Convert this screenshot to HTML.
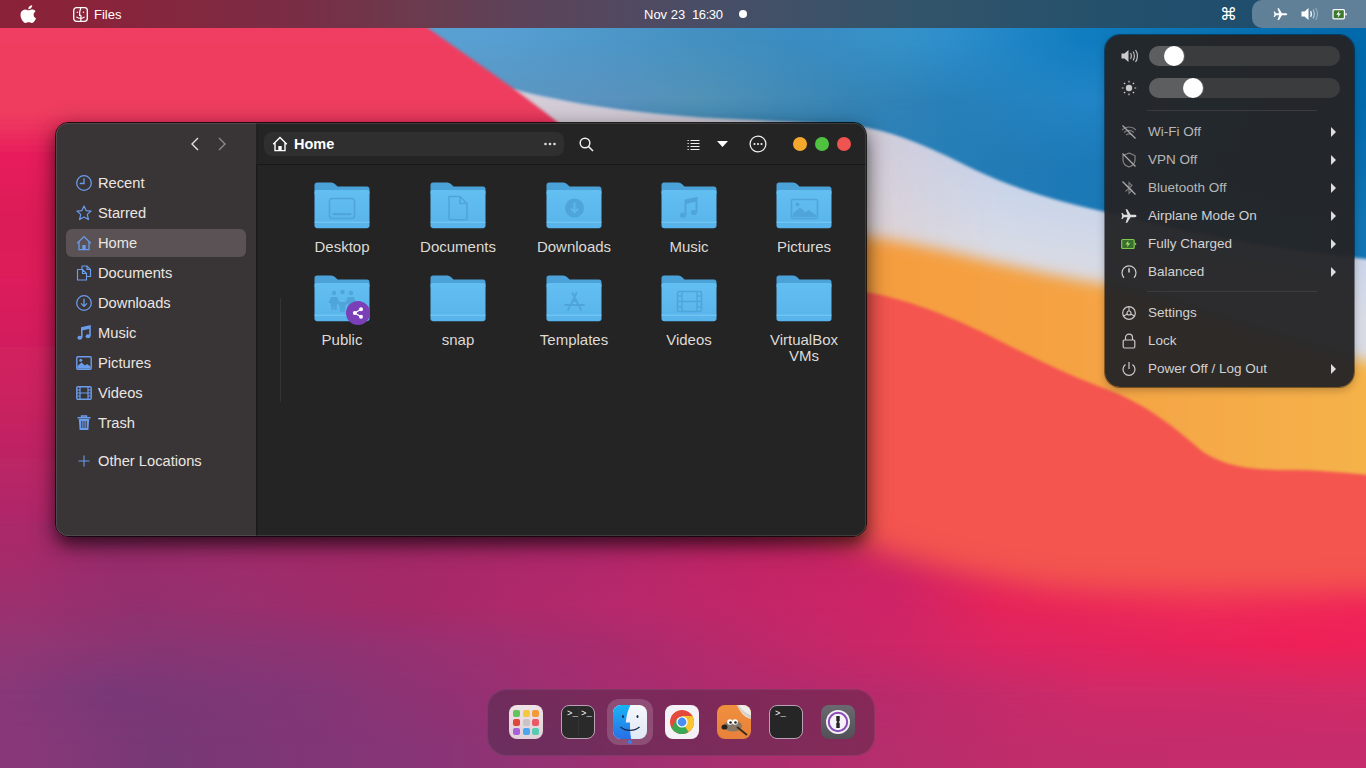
<!DOCTYPE html>
<html><head><meta charset="utf-8">
<style>
*{margin:0;padding:0;box-sizing:border-box}
html,body{width:1366px;height:768px;overflow:hidden;background:#b82a6c;font-family:"Liberation Sans",sans-serif}

#wp{position:absolute;left:0;top:0;width:1366px;height:768px}
.abs{position:absolute}
#topbar{position:absolute;left:0;top:0;width:1366px;height:28px;background:linear-gradient(to right,#8a2239 0px,#88243b 120px,#782e46 308px,#6c3a4c 408px,#5e4258 508px,#484e66 708px,#33546a 908px,#214f6c 1158px,#1e4c6e 1366px)}
.tb-t{position:absolute;top:7px;color:#fff;font-size:13.5px;line-height:15px;white-space:nowrap}
#pill{position:absolute;left:1252px;top:0;width:130px;height:27.5px;border-radius:10px;background:rgba(255,255,255,0.29)}
#win{position:absolute;left:55px;top:122px;width:812px;height:415px;border-radius:13px;overflow:hidden;border:1px solid rgba(0,0,0,0.85);box-shadow:0 9px 16px -2px rgba(0,0,0,0.5),0 6px 26px rgba(0,0,0,0.38)}
#winhl{position:absolute;left:0;top:0;width:810px;height:413px;border-radius:12px;box-shadow:inset 0 0 0 1px rgba(255,255,255,0.11);z-index:5;pointer-events:none}
#side{position:absolute;left:0;top:-1px;width:201px;height:414px;background:#393435}
#homehl{position:absolute;left:10px;top:107px;width:180px;height:28px;border-radius:6px;background:#5a5254}
.si{position:absolute;left:20px;height:20px;width:170px;margin-top:-1px}
.si .ic{position:absolute;left:0;top:2px;width:16px;height:16px}
.si span{position:absolute;left:22px;top:2px;font-size:14.7px;line-height:16px;color:#ebe6e2;white-space:nowrap}
#main{position:absolute;left:201px;top:-1px;width:609px;height:414px;background:#242424}
#hdr{position:absolute;left:-1px;top:0;width:610px;height:43px;border-bottom:1px solid #171717;background:#242424}
#pathbar{position:absolute;left:8px;top:10px;width:300px;height:24px;border-radius:8px;background:#2f2f2f}
#ptitle{position:absolute;left:30px;top:4px;color:#fff;font-weight:bold;font-size:14.5px;line-height:16px}
.dotb{position:absolute;top:15px;width:14px;height:14px;border-radius:50%}
#grid{position:absolute;left:-1px;top:42px;width:610px;height:414px}
.lbl{position:absolute;width:100px;text-align:center;color:#dedad6;font-size:15px;line-height:16px}
#qs{position:absolute;left:1105px;top:35px;width:249px;height:352px;border-radius:15px;background:rgba(36,36,38,0.96);box-shadow:0 0 0 1px rgba(0,0,0,0.4),0 3px 8px rgba(0,0,0,0.25)}
.track{position:absolute;left:44px;width:191px;height:20px;border-radius:10px;background:#3b3c3e;overflow:visible}
.track .fill{position:absolute;left:0;top:0;height:20px;border-radius:10px;background:#5d5e60}
.track .knob{position:absolute;top:0;width:20px;height:20px;border-radius:50%;background:#fff}
.sep{position:absolute;left:42px;width:170px;height:1px;background:#3c3c3e}
.qi{position:absolute;left:16px;width:220px;height:20px}
.qi .qic{position:absolute;left:0;top:2px;width:16px;height:16px}
.qi span{position:absolute;left:27px;top:2px;font-size:13.5px;line-height:16px;color:#d2d2d2;white-space:nowrap}
.qi i{position:absolute;left:210px;top:5px;width:0;height:0;border-left:5px solid #ddd;border-top:5px solid transparent;border-bottom:5px solid transparent}
#dock{position:absolute;left:487px;top:689px;width:388px;height:67px;border-radius:20px;background:rgba(30,36,46,0.32);box-shadow:inset 0 0 0 1px rgba(255,255,255,0.07)}
#dhl{position:absolute;left:120px;top:10px;width:46px;height:46px;border-radius:12px;background:rgba(255,255,255,0.17)}
.di{position:absolute;top:16px;width:34px;height:34px;border-radius:8px}
.lp{position:absolute;width:7px;height:7px;border-radius:2px}
.tt{position:absolute;color:#fff;font-family:"Liberation Mono",monospace;font-size:9px;line-height:10px}
</style></head><body>
<svg id="wp" width="1366" height="768" viewBox="0 0 1366 768">
<defs>
<filter id="b2" x="-10%" y="-10%" width="120%" height="120%"><feGaussianBlur stdDeviation="1.5"/></filter>
<filter id="b4" x="-10%" y="-10%" width="120%" height="120%"><feGaussianBlur stdDeviation="3"/></filter>
<filter id="b8" x="-10%" y="-10%" width="120%" height="120%"><feGaussianBlur stdDeviation="7"/></filter>
<filter id="b14" x="-10%" y="-10%" width="120%" height="120%"><feGaussianBlur stdDeviation="14"/></filter>
<filter id="b35" x="-10%" y="-10%" width="120%" height="120%"><feGaussianBlur stdDeviation="38"/></filter>
<linearGradient id="gBlue" gradientUnits="userSpaceOnUse" x1="430" y1="60" x2="1366" y2="200">
<stop offset="0" stop-color="#4c93c2"/><stop offset="0.35" stop-color="#4490c4"/><stop offset="0.7" stop-color="#2f87c8"/><stop offset="1" stop-color="#1e7cc4"/>
</linearGradient>
<linearGradient id="gOrange" gradientUnits="userSpaceOnUse" x1="900" y1="0" x2="1366" y2="0"><stop offset="0" stop-color="#f59e40"/><stop offset="0.35" stop-color="#f5a243"/><stop offset="1" stop-color="#f5b24a"/></linearGradient>
<linearGradient id="gLav" gradientUnits="userSpaceOnUse" x1="1000" y1="165" x2="985" y2="250"><stop offset="0" stop-color="#c6d2ea"/><stop offset="0.6" stop-color="#d0d8e8"/><stop offset="1" stop-color="#d8dae4"/></linearGradient>
<linearGradient id="gLavW" gradientUnits="userSpaceOnUse" x1="866" y1="0" x2="1000" y2="0"><stop offset="0" stop-color="#e0c8c8" stop-opacity="0.5"/><stop offset="1" stop-color="#e0c8c8" stop-opacity="0"/></linearGradient>
<linearGradient id="gPink" gradientUnits="userSpaceOnUse" x1="0" y1="0" x2="0" y2="560"><stop offset="0.0500" stop-color="#f03e62"/><stop offset="0.2000" stop-color="#ee3c5e"/><stop offset="0.2750" stop-color="#e81e5c"/><stop offset="0.3821" stop-color="#dc1c58"/><stop offset="0.4893" stop-color="#dd1d5a"/><stop offset="0.7232" stop-color="#c92160"/><stop offset="0.9554" stop-color="#aa296a"/><stop offset="1.0000" stop-color="#a82a6a"/></linearGradient>
<filter id="mb" x="-20%" y="-20%" width="140%" height="140%"><feGaussianBlur stdDeviation="14"/></filter><mask id="lowMask" maskUnits="userSpaceOnUse" x="-200" y="0" width="1766" height="1000"><path d="M-100,470 L700,505 C780,520 830,535 866,545 C900,558 960,575 1040,586 C1150,596 1300,592 1466,590 L1466,900 L-100,900 Z" fill="#fff" filter="url(#mb)"/></mask>
</defs>
<defs><linearGradient id="brow0" gradientUnits="userSpaceOnUse" x1="0" y1="0" x2="1366" y2="0"><stop offset="0.3148" stop-color="#5aa0d2"/><stop offset="0.3660" stop-color="#579fd2"/><stop offset="0.5183" stop-color="#4390c0"/><stop offset="0.5857" stop-color="#3a8cc2"/><stop offset="0.6589" stop-color="#3592c8"/><stop offset="0.6955" stop-color="#2e8ecc"/><stop offset="0.7906" stop-color="#107dc0"/><stop offset="1.0000" stop-color="#026aac"/></linearGradient>
<linearGradient id="brow1" gradientUnits="userSpaceOnUse" x1="0" y1="0" x2="1366" y2="0"><stop offset="0.3660" stop-color="#5a96c0"/><stop offset="0.4466" stop-color="#5a92be"/><stop offset="0.5124" stop-color="#5292b6"/><stop offset="0.6223" stop-color="#3684b5"/><stop offset="0.6955" stop-color="#2880b8"/><stop offset="0.7980" stop-color="#2285c6"/><stop offset="1.0000" stop-color="#026aac"/></linearGradient>
<linearGradient id="brm1" gradientUnits="userSpaceOnUse" x1="0" y1="40" x2="0" y2="100"><stop offset="0" stop-color="#fff" stop-opacity="0"/><stop offset="1" stop-color="#fff" stop-opacity="1"/></linearGradient>
<mask id="bmk1" maskUnits="userSpaceOnUse" x="-100" y="-100" width="1566" height="1000"><rect x="-100" y="40" width="1566" height="860" fill="url(#brm1)"/></mask>
<linearGradient id="brow2" gradientUnits="userSpaceOnUse" x1="0" y1="0" x2="1366" y2="0"><stop offset="0.6340" stop-color="#2e82b8"/><stop offset="0.7321" stop-color="#237bb5"/><stop offset="0.7980" stop-color="#1c7ab8"/><stop offset="1.0000" stop-color="#0a6eae"/></linearGradient>
<linearGradient id="brm2" gradientUnits="userSpaceOnUse" x1="0" y1="100" x2="0" y2="160"><stop offset="0" stop-color="#fff" stop-opacity="0"/><stop offset="1" stop-color="#fff" stop-opacity="1"/></linearGradient>
<mask id="bmk2" maskUnits="userSpaceOnUse" x="-100" y="-100" width="1566" height="1000"><rect x="-100" y="100" width="1566" height="800" fill="url(#brm2)"/></mask>
<linearGradient id="brow3" gradientUnits="userSpaceOnUse" x1="0" y1="0" x2="1366" y2="0"><stop offset="0.6340" stop-color="#2a80b8"/><stop offset="0.7980" stop-color="#1b78b5"/><stop offset="1.0000" stop-color="#1274b2"/></linearGradient>
<linearGradient id="brm3" gradientUnits="userSpaceOnUse" x1="0" y1="160" x2="0" y2="220"><stop offset="0" stop-color="#fff" stop-opacity="0"/><stop offset="1" stop-color="#fff" stop-opacity="1"/></linearGradient>
<mask id="bmk3" maskUnits="userSpaceOnUse" x="-100" y="-100" width="1566" height="1000"><rect x="-100" y="160" width="1566" height="740" fill="url(#brm3)"/></mask></defs>
<rect x="-100" y="-100" width="1566" height="1000" fill="url(#brow0)"/>
<rect x="-100" y="40" width="1566" height="860" fill="url(#brow1)" mask="url(#bmk1)"/>
<rect x="-100" y="100" width="1566" height="800" fill="url(#brow2)" mask="url(#bmk2)"/>
<rect x="-100" y="160" width="1566" height="740" fill="url(#brow3)" mask="url(#bmk3)"/>
<!-- lavender -->
<path d="M515,90 C560,102 620,112 700,118 C780,122 840,124 866,128 C900,134 935,150 975,170 C1010,186 1050,200 1106,212 C1200,236 1300,254 1400,262 L1400,800 L-50,800 L-50,300 Z" fill="url(#gLav)" filter="url(#b2)"/>
<path d="M515,90 C560,102 620,112 700,118 C780,122 840,124 866,128 C900,134 935,150 975,170 C1010,186 1050,200 1106,212 C1200,236 1300,254 1400,262 L1400,800 L-50,800 L-50,300 Z" fill="url(#gLavW)" filter="url(#b2)"/>
<!-- orange -->
<path d="M-50,300 L700,228 C780,232 840,234 866,236 C900,241 940,249 980,259 C1030,270 1070,280 1106,284 C1200,306 1300,350 1400,368 L1400,800 L-50,800 Z" fill="url(#gOrange)" filter="url(#b8)"/>
<!-- coral -->
<path d="M-50,340 L700,282 C800,285 840,288 866,292 C900,298 935,310 980,331 C1015,348 1050,368 1106,389 C1150,406 1175,428 1203,452 C1228,468 1255,470 1290,470 C1320,470 1345,473 1400,478 L1400,800 L-50,800 Z" fill="#f45450" filter="url(#b2)"/>
<!-- lower grid -->
<defs><linearGradient id="row0" gradientUnits="userSpaceOnUse" x1="0" y1="0" x2="1366" y2="0"><stop offset="0.0146" stop-color="#aa296a"/><stop offset="0.0791" stop-color="#9a2b6a"/><stop offset="0.1669" stop-color="#a02b6b"/><stop offset="0.2987" stop-color="#a52968"/><stop offset="0.4392" stop-color="#b0276a"/><stop offset="0.5183" stop-color="#bc2464"/><stop offset="0.6340" stop-color="#c82462"/><stop offset="0.7321" stop-color="#dc2460"/><stop offset="0.8785" stop-color="#e82a5a"/><stop offset="1.0000" stop-color="#ec2c58"/></linearGradient>
<linearGradient id="row1" gradientUnits="userSpaceOnUse" x1="0" y1="0" x2="1366" y2="0"><stop offset="0.0146" stop-color="#9c306e"/><stop offset="0.1025" stop-color="#922f6e"/><stop offset="0.1669" stop-color="#98306e"/><stop offset="0.2987" stop-color="#a42968"/><stop offset="0.4451" stop-color="#b6296c"/><stop offset="0.5622" stop-color="#c42668"/><stop offset="0.6589" stop-color="#d02466"/><stop offset="0.7321" stop-color="#e62459"/><stop offset="0.8785" stop-color="#ee2c58"/><stop offset="1.0000" stop-color="#ef2458"/></linearGradient>
<linearGradient id="rm1" gradientUnits="userSpaceOnUse" x1="0" y1="540" x2="0" y2="605"><stop offset="0" stop-color="#fff" stop-opacity="0"/><stop offset="1" stop-color="#fff" stop-opacity="1"/></linearGradient>
<mask id="mk1" maskUnits="userSpaceOnUse" x="-100" y="0" width="1566" height="900"><rect x="-100" y="540" width="1566" height="360" fill="url(#rm1)"/></mask>
<linearGradient id="row2" gradientUnits="userSpaceOnUse" x1="0" y1="0" x2="1366" y2="0"><stop offset="0.0059" stop-color="#933674"/><stop offset="0.1157" stop-color="#883572"/><stop offset="0.2255" stop-color="#8e3373"/><stop offset="0.4451" stop-color="#a82c6e"/><stop offset="0.6589" stop-color="#ce2666"/><stop offset="0.7321" stop-color="#dc2562"/><stop offset="0.8053" stop-color="#e2245e"/><stop offset="0.9575" stop-color="#ef2057"/><stop offset="1.0000" stop-color="#ee2258"/></linearGradient>
<linearGradient id="rm2" gradientUnits="userSpaceOnUse" x1="0" y1="605" x2="0" y2="645"><stop offset="0" stop-color="#fff" stop-opacity="0"/><stop offset="1" stop-color="#fff" stop-opacity="1"/></linearGradient>
<mask id="mk2" maskUnits="userSpaceOnUse" x="-100" y="0" width="1566" height="900"><rect x="-100" y="605" width="1566" height="295" fill="url(#rm2)"/></mask>
<linearGradient id="row3" gradientUnits="userSpaceOnUse" x1="0" y1="0" x2="1366" y2="0"><stop offset="0.0059" stop-color="#883878"/><stop offset="0.0791" stop-color="#793878"/><stop offset="0.2255" stop-color="#823676"/><stop offset="0.4451" stop-color="#a52d70"/><stop offset="0.6501" stop-color="#ba2a6c"/><stop offset="0.8053" stop-color="#d02a68"/><stop offset="0.8770" stop-color="#d02a68"/><stop offset="1.0000" stop-color="#d42a66"/></linearGradient>
<linearGradient id="rm3" gradientUnits="userSpaceOnUse" x1="0" y1="645" x2="0" y2="692"><stop offset="0" stop-color="#fff" stop-opacity="0"/><stop offset="1" stop-color="#fff" stop-opacity="1"/></linearGradient>
<mask id="mk3" maskUnits="userSpaceOnUse" x="-100" y="0" width="1566" height="900"><rect x="-100" y="645" width="1566" height="255" fill="url(#rm3)"/></mask>
<linearGradient id="row4" gradientUnits="userSpaceOnUse" x1="0" y1="0" x2="1366" y2="0"><stop offset="0.0205" stop-color="#883878"/><stop offset="0.1157" stop-color="#773876"/><stop offset="0.1889" stop-color="#7d3776"/><stop offset="0.3280" stop-color="#8a3476"/><stop offset="0.5124" stop-color="#a62f70"/><stop offset="0.7379" stop-color="#c02c6a"/><stop offset="0.9575" stop-color="#c62c6c"/></linearGradient>
<linearGradient id="rm4" gradientUnits="userSpaceOnUse" x1="0" y1="692" x2="0" y2="745"><stop offset="0" stop-color="#fff" stop-opacity="0"/><stop offset="1" stop-color="#fff" stop-opacity="1"/></linearGradient>
<mask id="mk4" maskUnits="userSpaceOnUse" x="-100" y="0" width="1566" height="900"><rect x="-100" y="692" width="1566" height="208" fill="url(#rm4)"/></mask></defs>
<g mask="url(#lowMask)"><g>
<rect x="-100" y="420" width="1566" height="480" fill="url(#row0)"/>
<rect x="-100" y="540" width="1566" height="360" fill="url(#row1)" mask="url(#mk1)"/>
<rect x="-100" y="605" width="1566" height="295" fill="url(#row2)" mask="url(#mk2)"/>
<rect x="-100" y="645" width="1566" height="255" fill="url(#row3)" mask="url(#mk3)"/>
<rect x="-100" y="692" width="1566" height="208" fill="url(#row4)" mask="url(#mk4)"/>
</g></g>
<!-- pink top-left -->
<path d="M-50,-50 L350,-50 L389,0 L428,28 C470,58 515,88 556,121 C650,200 760,380 800,480 L800,522 L-50,522 Z" fill="url(#gPink)" filter="url(#b2)"/>
</svg>
<!-- top bar -->
<div id="topbar">
  <svg class="abs" style="left:20px;top:4px" width="17" height="19.5" viewBox="1.5 0.5 13.5 16.6" preserveAspectRatio="none"><path fill="#fff" d="M12.3,9.6c0-1.9,1.6-2.8,1.6-2.9c-0.9-1.3-2.3-1.5-2.8-1.5c-1.2-0.1-2.3,0.7-2.9,0.7c-0.6,0-1.5-0.7-2.5-0.7C4.4,5.2,3.2,6,2.5,7.2c-1.3,2.3-0.3,5.7,1,7.600c0.6,0.9,1.4,1.9,2.4,1.9c1,0,1.3-0.6,2.500-0.6c1.2,0,1.5,0.6,2.5,0.6c1,0,1.700-0.9,2.300-1.900c0.7-1.100,1-2.100,1-2.200C14.2,12.6,12.3,11.900,12.300,9.6z M10.400,3.900c0.5-0.6,0.9-1.500,0.8-2.400c-0.8,0-1.700,0.5-2.300,1.100c-0.5,0.6-0.9,1.500-0.8,2.300C9,5,9.900,4.500,10.400,3.900z"/></svg>
  <svg class="abs" style="left:72.5px;top:6.5px" width="15" height="15" viewBox="0 0 16 16"><rect x="0.75" y="0.75" width="14.5" height="14.5" rx="3" fill="none" stroke="#fff" stroke-width="1.4"/><path d="M8.2,1 C7.2,4 6.8,6.5 7,9 L8.6,9 M8.6,9 C8.4,11.5 8.2,13.5 8.4,15" fill="none" stroke="#fff" stroke-width="1.3"/><circle cx="4.6" cy="5.6" r="0.8" fill="#fff"/><circle cx="11.2" cy="5.6" r="0.8" fill="#fff"/><path d="M3.6,10.5 C6,12.5 10,12.5 12.4,10.5" fill="none" stroke="#fff" stroke-width="1.2"/></svg>
  <div class="tb-t" style="left:94px;font-size:13px">Files</div>
  <div class="tb-t" style="left:644px;font-size:13px;top:6.5px">Nov 23</div><div class="tb-t" style="left:692px;font-size:13px;top:6.5px;letter-spacing:-0.4px">16:30</div>
  <div class="abs" style="left:739px;top:10px;width:8px;height:8px;border-radius:50%;background:#fff"></div>
  <div class="abs" style="left:1220px;top:5px;color:#fff;font-size:17px;line-height:20px">&#8984;</div>
  <div id="pill"></div>
  <svg class="abs" style="left:1272.5px;top:7.5px" width="15" height="12.5" viewBox="0 0 16 14"><path fill="#fff" d="M15.5,7 C15.5,6.2 14.6,5.8 13.6,5.8 L9.6,5.8 L6.2,0.3 L4.6,0.3 L6.5,5.8 L2.9,5.8 L1.6,4 L0.4,4 L1.2,7 L0.4,10 L1.6,10 L2.9,8.2 L6.5,8.2 L4.6,13.7 L6.2,13.7 L9.6,8.2 L13.6,8.2 C14.6,8.2 15.5,7.8 15.5,7 Z"/></svg>
  <svg class="abs" style="left:1301px;top:7px" width="18" height="14" viewBox="0 0 18 14"><path fill="#fff" d="M0.5,4.5 L3.5,4.5 L7.5,1 L7.5,13 L3.5,9.5 L0.5,9.5 Z"/><path d="M9.5,4.2 C10.6,5.6 10.6,8.4 9.5,9.8" fill="none" stroke="#e8f4ff" stroke-width="1.5"/><path d="M12,2.5 C13.8,4.8 13.8,9.2 12,11.5" fill="none" stroke="#c8dcea" stroke-width="1.2" opacity="0.8"/><path d="M14.5,1 C17,4 17,10 14.5,13" fill="none" stroke="#c8dcea" stroke-width="1" opacity="0.6"/></svg>
  <svg class="abs" style="left:1332px;top:9px" width="16.5" height="10.5" viewBox="0 0 18 12"><rect x="0.75" y="0.75" width="13" height="10.5" rx="1.2" fill="#3e7a2e" stroke="#fff" stroke-width="1.4"/><path d="M15,4 L17,6 L15,8 Z" fill="#fff"/><path d="M8,2 L4.5,6.6 L7,6.6 L6,10 L9.8,5.2 L7.2,5.2 Z" fill="#fff"/></svg>
</div>

<!-- window -->
<div id="win">
  <div id="winhl"></div>
  <div id="side">
    <svg class="abs" style="left:133px;top:14px" width="12" height="16" viewBox="0 0 12 16"><path d="M9,2 L3,8 L9,14" fill="none" stroke="#e8e3e0" stroke-width="1.4"/></svg>
    <svg class="abs" style="left:160px;top:14px" width="12" height="16" viewBox="0 0 12 16"><path d="M3,2 L9,8 L3,14" fill="none" stroke="#8f8a88" stroke-width="1.4"/></svg>
    <div id="homehl"></div>
    <div class="abs" style="left:200px;top:0;width:1px;height:414px;background:#1b1b1b"></div>
    <div class="si" style="top:52px"><svg class="ic" viewBox="0 0 16 16"><circle cx="8" cy="8" r="7.3" fill="none" stroke="#6a9cec" stroke-width="1.3"/><path d="M8,3.2 L8,8.5 L3.8,8.5" fill="none" stroke="#6a9cec" stroke-width="1.3"/></svg><span>Recent</span></div>
    <div class="si" style="top:82px"><svg class="ic" viewBox="0 0 16 16"><path d="M8,1 L10.1,5.6 L15,6.1 L11.3,9.4 L12.4,14.6 L8,12 L3.6,14.6 L4.7,9.4 L1,6.1 L5.9,5.6 Z" fill="none" stroke="#6a9cec" stroke-width="1.2" stroke-linejoin="round"/></svg><span>Starred</span></div>
    <div class="si" style="top:112px"><svg class="ic" viewBox="0 0 16 16"><path d="M1.2,8.2 L8,1.6 L14.8,8.2 M3,6.8 L3,14.6 L13,14.6 L13,6.8" fill="none" stroke="#6a9cec" stroke-width="1.3"/><rect x="6.3" y="10" width="3.4" height="4.6" fill="#6a9cec"/></svg><span>Home</span></div>
    <div class="si" style="top:142px"><svg class="ic" viewBox="0 0 16 16"><path d="M6,1 L11,1 L14.5,4.5 L14.5,11.5 L10.5,11.5 M6,1 L6,4.5" fill="none" stroke="#6a9cec" stroke-width="1.2"/><path d="M1.5,4.5 L6.5,4.5 L10.5,8.5 L10.5,15 L1.5,15 Z M6.5,4.5 L6.5,8.5 L10.5,8.5" fill="none" stroke="#6a9cec" stroke-width="1.2" stroke-linejoin="round"/><path d="M11,1 L11,4.5 L14.5,4.5" fill="none" stroke="#6a9cec" stroke-width="1.2"/></svg><span>Documents</span></div>
    <div class="si" style="top:172px"><svg class="ic" viewBox="0 0 16 16"><circle cx="8" cy="8" r="7.3" fill="none" stroke="#6a9cec" stroke-width="1.3"/><path d="M8,3.8 L8,11.2 M5,8.4 L8,11.4 L11,8.4" fill="none" stroke="#6a9cec" stroke-width="1.3"/></svg><span>Downloads</span></div>
    <div class="si" style="top:202px"><svg class="ic" viewBox="0 0 16 16"><path d="M5.8,12.5 L5.8,2.8 L14,1 L14,11" fill="none" stroke="#6a9cec" stroke-width="1.6"/><path d="M5.8,2.8 L14,1 L14,3.8 L5.8,5.6 Z" fill="#6a9cec"/><ellipse cx="3.8" cy="12.8" rx="2.4" ry="2" fill="#6a9cec"/><ellipse cx="12" cy="11.2" rx="2.4" ry="2" fill="#6a9cec"/></svg><span>Music</span></div>
    <div class="si" style="top:232px"><svg class="ic" viewBox="0 0 16 16"><rect x="0.8" y="1.8" width="14.4" height="12.4" rx="1" fill="none" stroke="#6a9cec" stroke-width="1.4"/><path d="M1.5,13.5 L1.5,11 L5.5,7.5 L9,10.5 L11,9 L14.5,11.5 L14.5,13.5 Z" fill="#6a9cec"/><circle cx="4.8" cy="5.2" r="1.5" fill="#6a9cec"/></svg><span>Pictures</span></div>
    <div class="si" style="top:262px"><svg class="ic" viewBox="0 0 16 16"><rect x="0.8" y="1.8" width="14.4" height="12.4" rx="1" fill="none" stroke="#6a9cec" stroke-width="1.4"/><path d="M4,2 L4,14 M12,2 L12,14 M1,8 L15,8 M1,5 L4,5 M1,11 L4,11 M12,5 L15,5 M12,11 L15,11" stroke="#6a9cec" stroke-width="1.2"/></svg><span>Videos</span></div>
    <div class="si" style="top:292px"><svg class="ic" viewBox="0 0 16 16"><path d="M5.5,2.2 L5.5,1 L10.5,1 L10.5,2.2 M1.5,2.8 L14.5,2.8" fill="none" stroke="#6a9cec" stroke-width="1.4"/><path d="M2.8,4 L13.2,4 L12.4,15 L3.6,15 Z" fill="#6a9cec"/><path d="M5.8,6 L5.8,13 M8,6 L8,13 M10.2,6 L10.2,13" stroke="#393435" stroke-width="1"/></svg><span>Trash</span></div>
    <div class="si" style="top:330px"><svg class="ic" viewBox="0 0 16 16"><path d="M8,2.5 L8,13.5 M2.5,8 L13.5,8" stroke="#6a9cec" stroke-width="1.1"/></svg><span>Other Locations</span></div>
  </div>
  
  <div id="main">
    <div id="hdr">
      <div id="pathbar">
        <svg class="abs" style="left:8px;top:4px" width="16" height="16" viewBox="0 0 16 16"><path d="M1.2,8.2 L8,1.6 L14.8,8.2 M3,6.8 L3,14.6 L13,14.6 L13,6.8" fill="none" stroke="#fff" stroke-width="1.4"/><rect x="6.3" y="10" width="3.4" height="4.6" fill="#fff"/></svg>
        <div id="ptitle">Home</div>
        <svg class="abs" style="left:280px;top:10px" width="12" height="4" viewBox="0 0 12 4"><circle cx="1.5" cy="2" r="1.3" fill="#ddd"/><circle cx="6" cy="2" r="1.3" fill="#ddd"/><circle cx="10.5" cy="2" r="1.3" fill="#ddd"/></svg>
      </div>
      <svg class="abs" style="left:323px;top:15px" width="15" height="15" viewBox="0 0 15 15"><circle cx="6" cy="6" r="4.8" fill="none" stroke="#eee" stroke-width="1.5"/><path d="M9.5,9.5 L14,14" stroke="#eee" stroke-width="1.6"/></svg>
      <svg class="abs" style="left:431px;top:17px" width="13" height="12" viewBox="0 0 13 12"><path d="M0.5,1.5 L1.8,1.5 M0.5,4.5 L1.8,4.5 M0.5,7.5 L1.8,7.5 M0.5,10.5 L1.8,10.5 M3.5,1.5 L12.5,1.5 M3.5,4.5 L12.5,4.5 M3.5,7.5 L12.5,7.5 M3.5,10.5 L12.5,10.5" stroke="#eee" stroke-width="1"/></svg>
      <svg class="abs" style="left:461px;top:19px" width="11" height="6" viewBox="0 0 11 6"><path d="M0,0 L11,0 L5.5,6 Z" fill="#fff"/></svg>
      <svg class="abs" style="left:493px;top:13px" width="18" height="18" viewBox="0 0 18 18"><circle cx="9" cy="9" r="7.9" fill="none" stroke="#eee" stroke-width="1.3"/><circle cx="5.5" cy="9" r="1.1" fill="#eee"/><circle cx="9" cy="9" r="1.1" fill="#eee"/><circle cx="12.5" cy="9" r="1.1" fill="#eee"/></svg>
      <div class="dotb" style="left:537px;background:#f4a82c"></div>
      <div class="dotb" style="left:559px;background:#4fc23f"></div>
      <div class="dotb" style="left:581px;background:#ee5450"></div>
    </div>
    <div class="abs" style="left:0;top:0;width:1px;height:414px;background:#1f1f1f;z-index:4"></div>
    <div id="grid">
<svg class="abs" style="left:58px;top:18px" width="57" height="48" viewBox="0 0 57 48">
<defs><linearGradient id="fg58_18" x1="0" y1="0" x2="0" y2="1"><stop offset="0" stop-color="#63bff2"/><stop offset="1" stop-color="#58b3ea"/></linearGradient></defs>
<path d="M3,0.5 L17,0.5 C19,0.5 20,1.2 21.5,2.6 L23.5,4.4 L53,4.4 C54.5,4.4 55.5,5.4 55.5,7 L55.5,12 L0.5,12 L0.5,3 C0.5,1.5 1.5,0.5 3,0.5 Z" fill="#4aa2d8"/>
<path d="M2.5,8 L53.5,8 C54.7,8 55.5,8.8 55.5,10 L55.5,43.5 C55.5,45.2 54.4,46.3 52.8,46.3 L3.2,46.3 C1.6,46.3 0.5,45.2 0.5,43.5 L0.5,10 C0.5,8.8 1.3,8 2.5,8 Z" fill="url(#fg58_18)"/>
<path d="M0.5,40.2 L55.5,40.2" stroke="#7ccbf5" stroke-width="1"/>
<rect x="15.5" y="16.5" width="25" height="20" rx="3" fill="none" stroke="#4fa5d9" stroke-width="1.6"/><rect x="18.5" y="31" width="19" height="2.2" rx="1" fill="#4fa5d9"/></svg>
<div class="lbl" style="left:36px;top:75px">Desktop</div>
<svg class="abs" style="left:174px;top:18px" width="57" height="48" viewBox="0 0 57 48">
<defs><linearGradient id="fg174_18" x1="0" y1="0" x2="0" y2="1"><stop offset="0" stop-color="#63bff2"/><stop offset="1" stop-color="#58b3ea"/></linearGradient></defs>
<path d="M3,0.5 L17,0.5 C19,0.5 20,1.2 21.5,2.6 L23.5,4.4 L53,4.4 C54.5,4.4 55.5,5.4 55.5,7 L55.5,12 L0.5,12 L0.5,3 C0.5,1.5 1.5,0.5 3,0.5 Z" fill="#4aa2d8"/>
<path d="M2.5,8 L53.5,8 C54.7,8 55.5,8.8 55.5,10 L55.5,43.5 C55.5,45.2 54.4,46.3 52.8,46.3 L3.2,46.3 C1.6,46.3 0.5,45.2 0.5,43.5 L0.5,10 C0.5,8.8 1.3,8 2.5,8 Z" fill="url(#fg174_18)"/>
<path d="M0.5,40.2 L55.5,40.2" stroke="#7ccbf5" stroke-width="1"/>
<path d="M19,14.5 L30,14.5 L37,21.5 L37,36 C37,37 36.3,37.7 35.3,37.7 L20.7,37.7 C19.7,37.7 19,37 19,36 Z M30,14.5 L30,21.5 L37,21.5" fill="none" stroke="#4fa5d9" stroke-width="1.6" stroke-linejoin="round"/></svg>
<div class="lbl" style="left:152px;top:75px">Documents</div>
<svg class="abs" style="left:290px;top:18px" width="57" height="48" viewBox="0 0 57 48">
<defs><linearGradient id="fg290_18" x1="0" y1="0" x2="0" y2="1"><stop offset="0" stop-color="#63bff2"/><stop offset="1" stop-color="#58b3ea"/></linearGradient></defs>
<path d="M3,0.5 L17,0.5 C19,0.5 20,1.2 21.5,2.6 L23.5,4.4 L53,4.4 C54.5,4.4 55.5,5.4 55.5,7 L55.5,12 L0.5,12 L0.5,3 C0.5,1.5 1.5,0.5 3,0.5 Z" fill="#4aa2d8"/>
<path d="M2.5,8 L53.5,8 C54.7,8 55.5,8.8 55.5,10 L55.5,43.5 C55.5,45.2 54.4,46.3 52.8,46.3 L3.2,46.3 C1.6,46.3 0.5,45.2 0.5,43.5 L0.5,10 C0.5,8.8 1.3,8 2.5,8 Z" fill="url(#fg290_18)"/>
<path d="M0.5,40.2 L55.5,40.2" stroke="#7ccbf5" stroke-width="1"/>
<circle cx="28.5" cy="26" r="9.5" fill="#4fa5d9"/><path d="M28.5,20.5 L28.5,30 M24.8,26.6 L28.5,30.3 L32.2,26.6" fill="none" stroke="#5cb7ec" stroke-width="2"/></svg>
<div class="lbl" style="left:268px;top:75px">Downloads</div>
<svg class="abs" style="left:405px;top:18px" width="57" height="48" viewBox="0 0 57 48">
<defs><linearGradient id="fg405_18" x1="0" y1="0" x2="0" y2="1"><stop offset="0" stop-color="#63bff2"/><stop offset="1" stop-color="#58b3ea"/></linearGradient></defs>
<path d="M3,0.5 L17,0.5 C19,0.5 20,1.2 21.5,2.6 L23.5,4.4 L53,4.4 C54.5,4.4 55.5,5.4 55.5,7 L55.5,12 L0.5,12 L0.5,3 C0.5,1.5 1.5,0.5 3,0.5 Z" fill="#4aa2d8"/>
<path d="M2.5,8 L53.5,8 C54.7,8 55.5,8.8 55.5,10 L55.5,43.5 C55.5,45.2 54.4,46.3 52.8,46.3 L3.2,46.3 C1.6,46.3 0.5,45.2 0.5,43.5 L0.5,10 C0.5,8.8 1.3,8 2.5,8 Z" fill="url(#fg405_18)"/>
<path d="M0.5,40.2 L55.5,40.2" stroke="#7ccbf5" stroke-width="1"/>
<path d="M24.5,33 L24.5,18.5 L35.5,16 L35.5,30" fill="none" stroke="#4fa5d9" stroke-width="2"/><ellipse cx="22" cy="33.2" rx="3" ry="2.6" fill="#4fa5d9"/><ellipse cx="33" cy="30.4" rx="3" ry="2.6" fill="#4fa5d9"/><path d="M24.5,18.5 L35.5,16 L35.5,19.5 L24.5,22 Z" fill="#4fa5d9"/></svg>
<div class="lbl" style="left:383px;top:75px">Music</div>
<svg class="abs" style="left:520px;top:18px" width="57" height="48" viewBox="0 0 57 48">
<defs><linearGradient id="fg520_18" x1="0" y1="0" x2="0" y2="1"><stop offset="0" stop-color="#63bff2"/><stop offset="1" stop-color="#58b3ea"/></linearGradient></defs>
<path d="M3,0.5 L17,0.5 C19,0.5 20,1.2 21.5,2.6 L23.5,4.4 L53,4.4 C54.5,4.4 55.5,5.4 55.5,7 L55.5,12 L0.5,12 L0.5,3 C0.5,1.5 1.5,0.5 3,0.5 Z" fill="#4aa2d8"/>
<path d="M2.5,8 L53.5,8 C54.7,8 55.5,8.8 55.5,10 L55.5,43.5 C55.5,45.2 54.4,46.3 52.8,46.3 L3.2,46.3 C1.6,46.3 0.5,45.2 0.5,43.5 L0.5,10 C0.5,8.8 1.3,8 2.5,8 Z" fill="url(#fg520_18)"/>
<path d="M0.5,40.2 L55.5,40.2" stroke="#7ccbf5" stroke-width="1"/>
<rect x="15.5" y="17.5" width="26" height="19" rx="1.5" fill="none" stroke="#4fa5d9" stroke-width="1.6"/><path d="M17,35 L17,31.5 L24,25.5 L29.5,30.5 L32.5,28 L40,33 L40,35 Z" fill="#4fa5d9"/><circle cx="21.5" cy="22.5" r="2" fill="#4fa5d9"/></svg>
<div class="lbl" style="left:498px;top:75px">Pictures</div>
<svg class="abs" style="left:58px;top:111px" width="57" height="48" viewBox="0 0 57 48">
<defs><linearGradient id="fg58_111" x1="0" y1="0" x2="0" y2="1"><stop offset="0" stop-color="#63bff2"/><stop offset="1" stop-color="#58b3ea"/></linearGradient></defs>
<path d="M3,0.5 L17,0.5 C19,0.5 20,1.2 21.5,2.6 L23.5,4.4 L53,4.4 C54.5,4.4 55.5,5.4 55.5,7 L55.5,12 L0.5,12 L0.5,3 C0.5,1.5 1.5,0.5 3,0.5 Z" fill="#4aa2d8"/>
<path d="M2.5,8 L53.5,8 C54.7,8 55.5,8.8 55.5,10 L55.5,43.5 C55.5,45.2 54.4,46.3 52.8,46.3 L3.2,46.3 C1.6,46.3 0.5,45.2 0.5,43.5 L0.5,10 C0.5,8.8 1.3,8 2.5,8 Z" fill="url(#fg58_111)"/>
<path d="M0.5,40.2 L55.5,40.2" stroke="#7ccbf5" stroke-width="1"/>
<g fill="#4fa5d9"><circle cx="20" cy="18" r="2.2"/><circle cx="28.5" cy="17" r="2.2"/><circle cx="37" cy="18" r="2.2"/><path d="M17,22 L23,22 L25.5,27 L31.5,27 L34,22 L40,22 L42.5,28 L40.5,28 L39.5,35 L37.5,35 L37,30 L36.5,35 L34.5,35 L34,29 L31.5,30 L30.5,37 L28.5,37 L28.5,31 L28,37 L26,37 L25.5,30 L23,29 L22.5,35 L20.5,35 L20,30 L19.5,35 L17.5,35 L16.5,28 L14.5,28 Z"/></g></svg>
<div class="lbl" style="left:36px;top:168px">Public</div>
<svg class="abs" style="left:174px;top:111px" width="57" height="48" viewBox="0 0 57 48">
<defs><linearGradient id="fg174_111" x1="0" y1="0" x2="0" y2="1"><stop offset="0" stop-color="#63bff2"/><stop offset="1" stop-color="#58b3ea"/></linearGradient></defs>
<path d="M3,0.5 L17,0.5 C19,0.5 20,1.2 21.5,2.6 L23.5,4.4 L53,4.4 C54.5,4.4 55.5,5.4 55.5,7 L55.5,12 L0.5,12 L0.5,3 C0.5,1.5 1.5,0.5 3,0.5 Z" fill="#4aa2d8"/>
<path d="M2.5,8 L53.5,8 C54.7,8 55.5,8.8 55.5,10 L55.5,43.5 C55.5,45.2 54.4,46.3 52.8,46.3 L3.2,46.3 C1.6,46.3 0.5,45.2 0.5,43.5 L0.5,10 C0.5,8.8 1.3,8 2.5,8 Z" fill="url(#fg174_111)"/>
<path d="M0.5,40.2 L55.5,40.2" stroke="#7ccbf5" stroke-width="1"/>
</svg>
<div class="lbl" style="left:152px;top:168px">snap</div>
<svg class="abs" style="left:290px;top:111px" width="57" height="48" viewBox="0 0 57 48">
<defs><linearGradient id="fg290_111" x1="0" y1="0" x2="0" y2="1"><stop offset="0" stop-color="#63bff2"/><stop offset="1" stop-color="#58b3ea"/></linearGradient></defs>
<path d="M3,0.5 L17,0.5 C19,0.5 20,1.2 21.5,2.6 L23.5,4.4 L53,4.4 C54.5,4.4 55.5,5.4 55.5,7 L55.5,12 L0.5,12 L0.5,3 C0.5,1.5 1.5,0.5 3,0.5 Z" fill="#4aa2d8"/>
<path d="M2.5,8 L53.5,8 C54.7,8 55.5,8.8 55.5,10 L55.5,43.5 C55.5,45.2 54.4,46.3 52.8,46.3 L3.2,46.3 C1.6,46.3 0.5,45.2 0.5,43.5 L0.5,10 C0.5,8.8 1.3,8 2.5,8 Z" fill="url(#fg290_111)"/>
<path d="M0.5,40.2 L55.5,40.2" stroke="#7ccbf5" stroke-width="1"/>
<path d="M22,35 L30.5,18 M35,35 L26.5,18 M19,30 L38,30 M30,26 L27,26" fill="none" stroke="#4fa5d9" stroke-width="1.8" stroke-linecap="round"/></svg>
<div class="lbl" style="left:268px;top:168px">Templates</div>
<svg class="abs" style="left:405px;top:111px" width="57" height="48" viewBox="0 0 57 48">
<defs><linearGradient id="fg405_111" x1="0" y1="0" x2="0" y2="1"><stop offset="0" stop-color="#63bff2"/><stop offset="1" stop-color="#58b3ea"/></linearGradient></defs>
<path d="M3,0.5 L17,0.5 C19,0.5 20,1.2 21.5,2.6 L23.5,4.4 L53,4.4 C54.5,4.4 55.5,5.4 55.5,7 L55.5,12 L0.5,12 L0.5,3 C0.5,1.5 1.5,0.5 3,0.5 Z" fill="#4aa2d8"/>
<path d="M2.5,8 L53.5,8 C54.7,8 55.5,8.8 55.5,10 L55.5,43.5 C55.5,45.2 54.4,46.3 52.8,46.3 L3.2,46.3 C1.6,46.3 0.5,45.2 0.5,43.5 L0.5,10 C0.5,8.8 1.3,8 2.5,8 Z" fill="url(#fg405_111)"/>
<path d="M0.5,40.2 L55.5,40.2" stroke="#7ccbf5" stroke-width="1"/>
<rect x="16.5" y="16.5" width="24" height="20" rx="1.5" fill="none" stroke="#4fa5d9" stroke-width="1.6"/><path d="M21,17 L21,36 M36,17 L36,36 M21,26.5 L36,26.5 M16.5,21 L21,21 M16.5,26.5 L21,26.5 M16.5,32 L21,32 M36,21 L40.5,21 M36,26.5 L40.5,26.5 M36,32 L40.5,32" stroke="#4fa5d9" stroke-width="1.4"/></svg>
<div class="lbl" style="left:383px;top:168px">Videos</div>
<svg class="abs" style="left:520px;top:111px" width="57" height="48" viewBox="0 0 57 48">
<defs><linearGradient id="fg520_111" x1="0" y1="0" x2="0" y2="1"><stop offset="0" stop-color="#63bff2"/><stop offset="1" stop-color="#58b3ea"/></linearGradient></defs>
<path d="M3,0.5 L17,0.5 C19,0.5 20,1.2 21.5,2.6 L23.5,4.4 L53,4.4 C54.5,4.4 55.5,5.4 55.5,7 L55.5,12 L0.5,12 L0.5,3 C0.5,1.5 1.5,0.5 3,0.5 Z" fill="#4aa2d8"/>
<path d="M2.5,8 L53.5,8 C54.7,8 55.5,8.8 55.5,10 L55.5,43.5 C55.5,45.2 54.4,46.3 52.8,46.3 L3.2,46.3 C1.6,46.3 0.5,45.2 0.5,43.5 L0.5,10 C0.5,8.8 1.3,8 2.5,8 Z" fill="url(#fg520_111)"/>
<path d="M0.5,40.2 L55.5,40.2" stroke="#7ccbf5" stroke-width="1"/>
</svg>
<div class="lbl" style="left:498px;top:168px">VirtualBox<br>VMs</div>
<div class="abs" style="left:90px;top:137px;width:24px;height:24px;border-radius:50%;background:#7b3fb8"><svg class="abs" style="left:5px;top:5px" width="14" height="14" viewBox="0 0 14 14"><circle cx="10" cy="3.2" r="2" fill="#fff"/><circle cx="3.8" cy="7" r="2" fill="#fff"/><circle cx="10" cy="10.8" r="2" fill="#fff"/><path d="M10,3.2 L3.8,7 L10,10.8" fill="none" stroke="#fff" stroke-width="1.3"/></svg></div>
<div class="abs" style="left:24px;top:134px;width:1px;height:104px;background:#343434"></div>
    </div>
  </div>
</div>

<!-- quick settings -->
<div id="qs">
  <svg class="abs" style="left:16px;top:14px" width="18" height="14" viewBox="0 0 18 14"><path fill="#ccc" d="M0.5,4.5 L3.5,4.5 L7.5,1 L7.5,13 L3.5,9.5 L0.5,9.5 Z"/><path d="M9.5,4.2 C10.6,5.6 10.6,8.4 9.5,9.8 M12,2.5 C13.8,4.8 13.8,9.2 12,11.5 M14.5,1 C17,4 17,10 14.5,13" fill="none" stroke="#ccc" stroke-width="1.1"/></svg>
  <div class="track" style="top:11px"><div class="fill" style="width:36px"></div><div class="knob" style="left:15px"></div></div>
  <svg class="abs" style="left:16px;top:45px" width="16" height="16" viewBox="0 0 16 16"><circle cx="8" cy="8" r="3.2" fill="#ccc"/><path d="M8,0.8 L8,2.6 M8,13.4 L8,15.2 M0.8,8 L2.6,8 M13.4,8 L15.2,8 M2.9,2.9 L4.2,4.2 M11.8,11.8 L13.1,13.1 M2.9,13.1 L4.2,11.8 M11.8,4.2 L13.1,2.9" stroke="#ccc" stroke-width="1.2"/></svg>
  <div class="track" style="top:43px"><div class="fill" style="width:55px"></div><div class="knob" style="left:34px"></div></div>
  <div class="sep" style="top:75px"></div>
  <div class="qi" style="top:87px"><svg class="qic" viewBox="0 0 16 16"><path d="M1,6 C5,2 11,2 15,6 M3,8.5 C6,6 10,6 13,8.5 M5,11 C7,9.5 9,9.5 11,11" fill="none" stroke="#7a7a7a" stroke-width="1.1"/><path d="M1.5,1.5 L14.5,14.5" stroke="#aaa" stroke-width="1.2"/></svg><span style="color:#b8b8b8">Wi-Fi Off</span><i></i></div>
  <div class="qi" style="top:115px"><svg class="qic" viewBox="0 0 16 16"><path d="M8,1 L14,3.5 L14,8 C14,11.5 11,14 8,15 C5,14 2,11.5 2,8 L2,3.5 Z" fill="none" stroke="#8a8a8a" stroke-width="1.1"/><path d="M1.5,1.5 L14.5,14.5" stroke="#aaa" stroke-width="1.2"/></svg><span style="color:#b8b8b8">VPN Off</span><i></i></div>
  <div class="qi" style="top:143px"><svg class="qic" viewBox="0 0 16 16"><path d="M4.5,4.5 L11,10.5 L8,13.5 L8,2.5 L11,5.5 L4.5,11.5" fill="none" stroke="#7a7a7a" stroke-width="1.1"/><path d="M1.5,1.5 L14.5,14.5" stroke="#aaa" stroke-width="1.2"/></svg><span style="color:#b8b8b8">Bluetooth Off</span><i></i></div>
  <div class="qi" style="top:171px"><svg class="qic" viewBox="0 0 16 16"><path fill="#ddd" d="M15.5,8 C15.5,7.2 14.6,6.8 13.6,6.8 L9.6,6.8 L6.2,1.3 L4.6,1.3 L6.5,6.8 L2.9,6.8 L1.6,5 L0.4,5 L1.2,8 L0.4,11 L1.6,11 L2.9,9.2 L6.5,9.2 L4.6,14.7 L6.2,14.7 L9.6,9.2 L13.6,9.2 C14.6,9.2 15.5,8.8 15.5,8 Z"/></svg><span>Airplane Mode On</span><i></i></div>
  <div class="qi" style="top:199px"><svg class="qic" viewBox="0 0 16 16"><rect x="0.7" y="3.5" width="12.5" height="9" rx="1" fill="#3a6e2c" stroke="#7ec850" stroke-width="1.2"/><path d="M14,6.5 L15.6,8 L14,9.5 Z" fill="#aaa"/><path d="M7.5,4.5 L4.5,8.4 L6.8,8.4 L5.8,11.5 L9.2,7.2 L7,7.2 Z" fill="#9fe070"/></svg><span>Fully Charged</span><i></i></div>
  <div class="qi" style="top:227px"><svg class="qic" viewBox="0 0 16 16"><path d="M3,13.8 A7,7 0 1 1 13,13.8" fill="none" stroke="#ccc" stroke-width="1.2"/><path d="M8,4.2 L8,8.5" stroke="#ccc" stroke-width="1.6"/></svg><span>Balanced</span><i></i></div>
  <div class="sep" style="top:256px"></div>
  <div class="qi" style="top:268px"><svg class="qic" viewBox="0 0 16 16"><circle cx="8" cy="8" r="6.3" fill="none" stroke="#ccc" stroke-width="1.2"/><circle cx="8" cy="8" r="2" fill="none" stroke="#ccc" stroke-width="1.1"/><path d="M8,6 L8,1.8 M6.3,9 L2.6,11 M9.7,9 L13.4,11" stroke="#ccc" stroke-width="1.1"/></svg><span>Settings</span></div>
  <div class="qi" style="top:296px"><svg class="qic" viewBox="0 0 16 16"><rect x="2.2" y="7" width="11.6" height="8" rx="1.2" fill="none" stroke="#ccc" stroke-width="1.2"/><path d="M4.5,7 L4.5,4.8 C4.5,2.6 6,1.2 8,1.2 C10,1.2 11.5,2.6 11.5,4.8 L11.5,7" fill="none" stroke="#ccc" stroke-width="1.2"/></svg><span>Lock</span></div>
  <div class="qi" style="top:324px"><svg class="qic" viewBox="0 0 16 16"><path d="M4.5,3.5 A6,6 0 1 0 11.5,3.5" fill="none" stroke="#ccc" stroke-width="1.2"/><path d="M8,1 L8,8" stroke="#ccc" stroke-width="1.2"/></svg><span>Power Off / Log Out</span><i></i></div>
</div>

<!-- dock -->
<div id="dock">

<div id="dhl"></div>
<!-- launchpad -->
<div class="di" style="left:22px;background:linear-gradient(#efe3e8,#e0d0d8)">
 <div class="lp" style="left:4px;top:4.5px;background:#62c45a"></div><div class="lp" style="left:13.5px;top:4.5px;background:#f5c842"></div><div class="lp" style="left:23px;top:4.5px;background:#f29a3a"></div>
 <div class="lp" style="left:4px;top:13.5px;background:#e0473a"></div><div class="lp" style="left:13.5px;top:13.5px;background:#c8c4c6"></div><div class="lp" style="left:23px;top:13.5px;background:#ea5a66"></div>
 <div class="lp" style="left:4px;top:22.5px;background:#a860d8"></div><div class="lp" style="left:13.5px;top:22.5px;background:#4aa6ee"></div><div class="lp" style="left:23px;top:22.5px;background:#58ccb0"></div>
</div>
<!-- terminal split -->
<div class="di" style="left:74px;background:#2a2a2a;border:1.5px solid #b8a2b4">
 <div class="abs" style="left:16px;top:1px;width:1px;height:30px;background:#333"></div>
 <div class="tt" style="left:5px;top:3px">&gt;_</div><div class="tt" style="left:19px;top:3px">&gt;_</div>
</div>
<!-- finder -->
<div class="di" style="left:126px;overflow:hidden">
 <svg class="abs" style="left:0;top:0" width="34" height="34" viewBox="0 0 34 34"><defs><linearGradient id="fdl" x1="0" y1="0" x2="0" y2="1"><stop offset="0" stop-color="#18b4f6"/><stop offset="1" stop-color="#2a6ee6"/></linearGradient><linearGradient id="fdr" x1="0" y1="0" x2="0" y2="1"><stop offset="0" stop-color="#f6f8fc"/><stop offset="1" stop-color="#dfe8f6"/></linearGradient></defs>
 <rect width="34" height="34" fill="url(#fdr)"/>
 <path d="M0,0 L17.5,0 C15,5 13.5,10 12.8,17.5 L17,17.5 C16.8,23 17.2,29 18.2,34 L0,34 Z" fill="url(#fdl)"/>
 <ellipse cx="10" cy="11.5" rx="1" ry="1.6" fill="#16284a"/><ellipse cx="24.5" cy="11.5" rx="1" ry="1.6" fill="#16284a"/>
 <path d="M7.5,22 C13,26.5 21,26.5 26.5,22" fill="none" stroke="#16284a" stroke-width="1.3"/></svg>
</div>
<div class="abs" style="left:141px;top:51px;width:4px;height:4px;border-radius:50%;background:#3a7ef0"></div>
<!-- chrome -->
<div class="di" style="left:178px;background:#f4f2f6">
 <svg class="abs" style="left:4px;top:4px" width="26" height="26" viewBox="0 0 26 26"><circle cx="13" cy="13" r="12" fill="#e34a3c"/><path d="M13,13 L2.6,19 A12,12 0 0 0 19.5,23.1 Z" fill="#3aa852"/><path d="M13,13 L19.5,23.1 A12,12 0 0 0 23.4,7 Z" fill="#f8c630"/><path d="M13,13 L23.4,7 L13,7 Z" fill="#f8c630"/><path d="M13,13 L2.6,19 L7.8,10 Z" fill="#3aa852"/><circle cx="13" cy="13" r="5.6" fill="#fff"/><circle cx="13" cy="13" r="4.4" fill="#4a8ef4"/></svg>
</div>
<!-- gimp -->
<div class="di" style="left:230px;background:linear-gradient(#f0903e,#e8803a);overflow:hidden">
 <svg class="abs" style="left:0;top:0" width="34" height="34" viewBox="0 0 34 34"><path d="M20,0 L34,0 L34,14 C30,13 27,11 24,7 C22,4 21,2 20,0 Z" fill="#f0ede8"/><path d="M20,0 C23,5 26,10 34,14 L34,10 C28,8 24,4 22,0 Z" fill="#d8d0c6"/><ellipse cx="16" cy="21" rx="9" ry="5.5" fill="#8a7866"/><circle cx="13" cy="17" r="2.8" fill="#fff"/><circle cx="18" cy="17" r="2.8" fill="#fff"/><circle cx="13.5" cy="17.5" r="1.3" fill="#222"/><circle cx="18.5" cy="17.5" r="1.3" fill="#222"/><ellipse cx="7.5" cy="22" rx="3" ry="2.6" fill="#222"/><path d="M20,22 L30,30" stroke="#3a2a1a" stroke-width="1.8"/></svg>
</div>
<!-- terminal -->
<div class="di" style="left:282px;background:#262626;border:1.5px solid #b8a2b4">
 <div class="tt" style="left:5px;top:3px">&gt;_</div>
</div>
<!-- 1password -->
<div class="di" style="left:334px;background:linear-gradient(#6a6a70,#505056)">
 <svg class="abs" style="left:3px;top:3px" width="28" height="28" viewBox="0 0 28 28"><circle cx="14" cy="14" r="12" fill="#f4f2f6"/><circle cx="14" cy="14" r="9.2" fill="none" stroke="#8a4ab8" stroke-width="2"/><path d="M12.3,8 L15.7,8 L15.7,13 L14.6,14 L15.7,15 L15.7,20 L12.3,20 L12.3,15 L13.4,14 L12.3,13 Z" fill="#222"/></svg>
</div>

</div>

</body></html>
